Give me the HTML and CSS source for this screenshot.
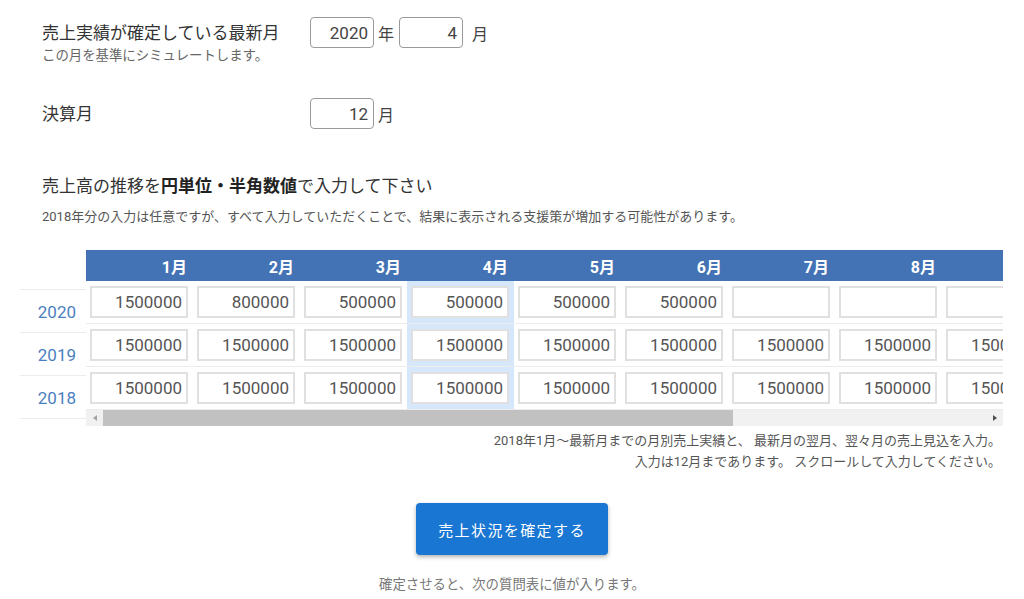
FILE: index.html
```html
<!DOCTYPE html>
<html lang="ja">
<head>
<meta charset="utf-8">
<title>売上入力</title>
<link rel="stylesheet" href="styles.css">
</head>
<body>
<div class="page">
  <div class="form-row first">
    <div class="label-block">
      <div class="label">売上実績が確定している最新月</div>
      <div class="hint">この月を基準にシミュレートします。</div>
    </div>
    <div class="fields">
      <input class="num" type="text" value="2020"><span class="unit">年</span><input class="num" type="text" value="4"><span class="unit wide">月</span>
    </div>
  </div>
  <div class="form-row second">
    <div class="label-block"><div class="label">決算月</div></div>
    <div class="fields">
      <input class="num" type="text" value="12"><span class="unit">月</span>
    </div>
  </div>

  <h2 class="heading">売上高の推移を<b>円単位・半角数値</b>で入力して下さい</h2>
  <p class="sub">2018年分の入力は任意ですが、すべて入力していただくことで、結果に表示される支援策が増加する可能性があります。</p>

  <div class="grid-wrap">
    <div class="years">
      <div class="year-spacer"></div>
      <div class="year">2020</div>
      <div class="year">2019</div>
      <div class="year last">2018</div>
    </div>
    <div class="main">
      <div class="scroll">
        <table class="sales">
          <thead>
            <tr>
              <th>1月</th><th>2月</th><th>3月</th><th>4月</th><th>5月</th><th>6月</th>
              <th>7月</th><th>8月</th><th>9月</th><th>10月</th><th>11月</th><th>12月</th>
            </tr>
          </thead>
          <tbody>
            <tr>
              <td><input type="text" value="1500000"></td>
              <td><input type="text" value="800000"></td>
              <td><input type="text" value="500000"></td>
              <td class="cur"><input type="text" value="500000"></td>
              <td><input type="text" value="500000"></td>
              <td><input type="text" value="500000"></td>
              <td><input type="text" value=""></td>
              <td><input type="text" value=""></td>
              <td><input type="text" value=""></td>
              <td><input type="text" value=""></td>
              <td><input type="text" value=""></td>
              <td><input type="text" value=""></td>
            </tr>
            <tr>
              <td><input type="text" value="1500000"></td>
              <td><input type="text" value="1500000"></td>
              <td><input type="text" value="1500000"></td>
              <td class="cur"><input type="text" value="1500000"></td>
              <td><input type="text" value="1500000"></td>
              <td><input type="text" value="1500000"></td>
              <td><input type="text" value="1500000"></td>
              <td><input type="text" value="1500000"></td>
              <td><input type="text" value="1500000"></td>
              <td><input type="text" value="1500000"></td>
              <td><input type="text" value="1500000"></td>
              <td><input type="text" value="1500000"></td>
            </tr>
            <tr>
              <td><input type="text" value="1500000"></td>
              <td><input type="text" value="1500000"></td>
              <td><input type="text" value="1500000"></td>
              <td class="cur"><input type="text" value="1500000"></td>
              <td><input type="text" value="1500000"></td>
              <td><input type="text" value="1500000"></td>
              <td><input type="text" value="1500000"></td>
              <td><input type="text" value="1500000"></td>
              <td><input type="text" value="1500000"></td>
              <td><input type="text" value="1500000"></td>
              <td><input type="text" value="1500000"></td>
              <td><input type="text" value="1500000"></td>
            </tr>
          </tbody>
        </table>
      </div>
      <div class="sbar">
        <div class="sbtn left"><span class="tri-left"></span></div>
        <div class="thumb"></div>
        <div class="track"></div>
        <div class="sbtn right"><span class="tri-right"></span></div>
      </div>
    </div>
  </div>

  <div class="notes">
    <p>2018年1月～最新月までの月別売上実績と、 最新月の翌月、翌々月の売上見込を入力。</p>
    <p>入力は12月まであります。 スクロールして入力してください。</p>
  </div>

  <div class="actions">
    <button class="confirm" type="button">売上状況を確定する</button>
    <p class="after">確定させると、次の質問表に値が入ります。</p>
  </div>
</div>
</body>
</html>
```

FILE: styles.css
```css
* { box-sizing: border-box; }

html, body {
  margin: 0;
  padding: 0;
  background: #fff;
}

body {
  font-family: "Roboto", "Noto Sans CJK JP", sans-serif;
  color: #333;
  width: 1024px;
  height: 599px;
  overflow: hidden;
}

.page {
  padding: 17px 21px 0 20px;
}

.form-row {
  display: flex;
  padding-left: 22px;
}

.form-row.first {
  align-items: flex-start;
  height: 46px;
}

.form-row.second {
  margin-top: 35px;
  align-items: center;
}

.label-block {
  width: 268px;
}

.form-row.first .label-block {
  margin-top: 4px;
}

.label {
  font-size: 17px;
  line-height: 24px;
  color: #333;
}

.hint {
  margin-top: 2px;
  font-size: 13.4px;
  line-height: 18px;
  color: #666;
}

.fields {
  display: flex;
  align-items: center;
}

.num {
  width: 64px;
  height: 31px;
  border: 1px solid #9a9a9a;
  border-radius: 4px;
  font-family: "Roboto", sans-serif;
  font-size: 17px;
  color: #444;
  text-align: right;
  padding: 0 5px 0 4px;
  margin: 0;
  outline: none;
}

.unit {
  font-size: 16px;
  color: #444;
  margin: 0 5px 0 4px;
}

.unit.wide {
  margin-left: 9px;
}

.heading {
  margin: 45px 0 0 22px;
  font-size: 17px;
  line-height: 24px;
  font-weight: 400;
  color: #333;
}

.heading b {
  font-weight: 700;
  color: #222;
}

.sub {
  margin: 10px 0 0 22px;
  font-size: 13px;
  line-height: 18px;
  color: #555;
}

.grid-wrap {
  display: flex;
  margin-top: 24px;
}

.years {
  width: 66px;
  flex: none;
}

.year-spacer {
  height: 39px;
}

.year {
  height: 43px;
  border-top: 1px solid #ececec;
  display: flex;
  align-items: center;
  justify-content: flex-end;
  padding: 1px 10px 0 0;
  font-size: 17px;
  color: #4b7fc1;
}

.year.last {
  height: 44px;
  border-bottom: 1px solid #ececec;
}

.main {
  width: 917px;
  flex: none;
}

.scroll {
  width: 917px;
  overflow: hidden;
}

.sales {
  border-collapse: separate;
  border-spacing: 0;
  width: 1284px;
  table-layout: fixed;
}

.sales th {
  width: 107px;
  height: 31px;
  padding: 0 6px 0 0;
  background: #4373b5;
  color: #fff;
  font-size: 16px;
  font-weight: 700;
  text-align: right;
}

.sales td {
  height: 43px;
  padding: 0 5px 0 4px;
  border-bottom: 1px solid #ececec;
  vertical-align: middle;
}

.sales td.cur {
  background: #d6e6fb;
}

.sales input {
  display: block;
  width: 98px;
  height: 32px;
  margin: 0;
  border: 2px solid #e0e0e0;
  background: #fff;
  font-family: "Roboto", sans-serif;
  font-size: 17px;
  color: #555;
  text-align: right;
  padding: 0 4px 0 2px;
  outline: none;
}

.sbar {
  display: flex;
  height: 16px;
  background: #f1f1f1;
}

.sbtn {
  width: 17px;
  flex: none;
  display: flex;
  align-items: center;
  justify-content: center;
}

.tri-left {
  width: 0;
  height: 0;
  border-top: 3.5px solid transparent;
  border-bottom: 3.5px solid transparent;
  border-right: 4px solid #a3a3a3;
}

.tri-right {
  width: 0;
  height: 0;
  border-top: 3.5px solid transparent;
  border-bottom: 3.5px solid transparent;
  border-left: 4px solid #505050;
}

.thumb {
  width: 630px;
  flex: none;
  background: #c1c1c1;
}

.track {
  flex: 1;
}

.notes {
  margin-top: 4px;
  text-align: right;
  padding-right: 2px;
}

.notes p {
  margin: 0;
  font-size: 13px;
  line-height: 21px;
  color: #555;
}

.actions {
  display: flex;
  flex-direction: column;
  align-items: center;
  margin-top: 31px;
  margin-left: -20px;
  margin-right: -21px;
}

.confirm {
  width: 192px;
  height: 52px;
  border: none;
  border-radius: 4px;
  background: #1976d2;
  color: #fff;
  font-family: "Roboto", "Noto Sans CJK JP", sans-serif;
  font-size: 15px;
  letter-spacing: 1.4px;
  box-shadow: 0 2px 4px rgba(0, 0, 0, 0.3);
  cursor: pointer;
  padding: 0;
}

.after {
  margin: 21px 0 0;
  font-size: 13.4px;
  line-height: 18px;
  color: #777;
}
```
